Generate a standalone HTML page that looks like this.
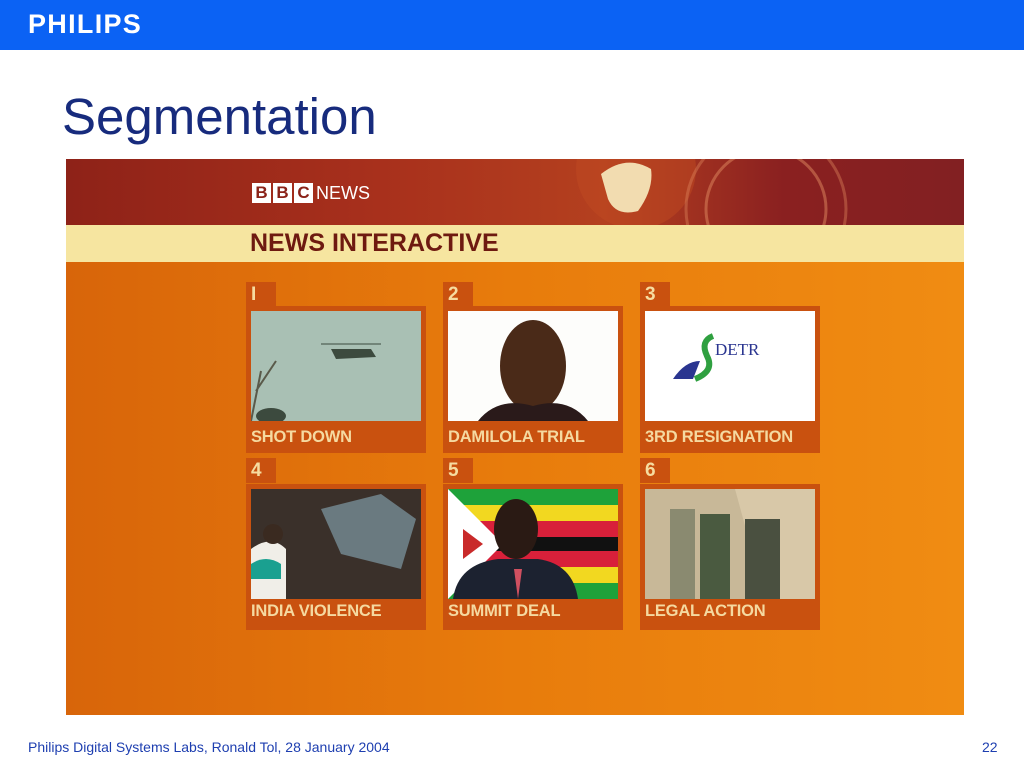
<!DOCTYPE html>
<html><head><meta charset="utf-8"><style>
*{margin:0;padding:0;box-sizing:border-box}
body{width:1024px;height:768px;position:relative;background:#fff;overflow:hidden;font-family:"Liberation Sans",sans-serif}
.a{position:absolute}
.top{left:0;top:0;width:1024px;height:50px;background:#0b62f4}
.logo{left:28px;top:9px;color:#fff;font-weight:bold;font-size:27px;letter-spacing:1.3px}
.title{left:62px;top:87px;color:#172b7d;font-size:51px}
.scr{left:66px;top:159px;width:898px;height:556px;background:linear-gradient(90deg,#d8650a 0%,#e87c0c 50%,#f08c12 100%);overflow:hidden}
.red{left:0;top:0;width:898px;height:66px;background:linear-gradient(90deg,#8e2218 0%,#a8301c 35%,#b4401f 60%,#8a2020 80%,#822022 100%)}
.yel{left:0;top:66px;width:898px;height:37px;background:#f6e5a0}
.tab{width:30px;height:25px;background:#c9510f;color:#f6dca0;font-weight:bold;font-size:19px;padding-left:5px;line-height:25px}
.box{width:180px;background:#c9510f}
.img{position:absolute;left:5px;top:5px;width:170px;overflow:hidden}
.lab{position:absolute;left:5px;color:#f5d9a0;font-weight:bold;font-size:16.5px;letter-spacing:-0.2px}
.ft{top:739px;font-size:14px;color:#1e3fb0}
</style></head><body>
<div class="a top"></div>
<div class="a logo">PHILIPS</div>
<div class="a title">Segmentation</div>
<div class="a scr">
 <div class="a red"></div>
 <svg class="a" style="left:500px;top:0" width="300" height="66"><circle cx="70" cy="10" r="60" fill="#c04a22" opacity=".5"/><path d="M35 15 Q60 -5 85 10 Q88 30 72 52 Q50 58 42 40 Z" fill="#f2dcb0"/><circle cx="200" cy="50" r="60" fill="none" stroke="#e08a60" stroke-width="3" opacity=".5"/><circle cx="200" cy="50" r="80" fill="none" stroke="#e08a60" stroke-width="3" opacity=".4"/></svg>
 <div class="a" style="left:186px;top:24px;display:flex;gap:2px">
  <span style="background:#fff;color:#8a2218;font-weight:bold;font-size:17px;width:19px;height:20px;text-align:center;line-height:20px">B</span>
  <span style="background:#fff;color:#8a2218;font-weight:bold;font-size:17px;width:19px;height:20px;text-align:center;line-height:20px">B</span>
  <span style="background:#fff;color:#8a2218;font-weight:bold;font-size:17px;width:19px;height:20px;text-align:center;line-height:20px">C</span>
  <span style="color:#fff;font-size:18px;line-height:20px;margin-left:1px">NEWS</span>
 </div>
 <div class="a yel"></div>
 <div class="a" style="left:184px;top:70px;color:#6e1a10;font-weight:bold;font-size:25px">NEWS INTERACTIVE</div>
</div>

<div class="a tab" style="left:246px;top:282px">I</div>
<div class="a box" style="left:246px;top:306px;height:147px">
 <div class="img" style="height:110px;background:#a9c0b4"><svg width="170" height="110"><path d="M80 38h40l5 8-40 2z" fill="#3c4a3e"/><path d="M70 33h60" stroke="#3c4a3e"/><path d="M0 110 L10 60 M5 80 L25 50" stroke="#5a5a4a" stroke-width="2"/><ellipse cx="20" cy="105" rx="15" ry="8" fill="#3c4a3e"/></svg></div>
 <div class="lab" style="top:122px">SHOT DOWN</div>
</div>
<div class="a tab" style="left:443px;top:282px">2</div>
<div class="a box" style="left:443px;top:306px;height:147px">
 <div class="img" style="height:110px;background:#fdfdfb"><svg width="170" height="110"><ellipse cx="85" cy="55" rx="33" ry="46" fill="#4a2a18"/><path d="M30 110 Q50 85 85 95 Q120 85 140 110Z" fill="#2a1a1a"/></svg></div>
 <div class="lab" style="top:122px">DAMILOLA TRIAL</div>
</div>
<div class="a tab" style="left:640px;top:282px">3</div>
<div class="a box" style="left:640px;top:306px;height:147px">
 <div class="img" style="height:110px;background:#fff"><svg width="170" height="110"><path d="M28 68 Q40 50 55 50 L48 68Z" fill="#2a3590"/><path d="M50 68 Q70 60 62 45 Q55 30 68 25" stroke="#2fa040" stroke-width="6" fill="none"/><text x="70" y="44" font-family="Liberation Serif" font-size="17" fill="#2a3590">DETR</text></svg></div>
 <div class="lab" style="top:122px">3RD RESIGNATION</div>
</div>

<div class="a tab" style="left:246px;top:458px">4</div>
<div class="a box" style="left:246px;top:484px;height:146px">
 <div class="img" style="height:110px;background:#3a302a"><svg width="170" height="110"><path d="M70 20 L130 5 L165 30 L150 80 L90 65Z" fill="#6a7a80"/><path d="M0 110 V60 Q20 45 35 60 V110Z" fill="#f0eee8"/><path d="M0 75 Q15 65 30 75 V90 H0Z" fill="#1aa090"/><circle cx="22" cy="45" r="10" fill="#3a2a20"/></svg></div>
 <div class="lab" style="top:118px">INDIA VIOLENCE</div>
</div>
<div class="a tab" style="left:443px;top:458px">5</div>
<div class="a box" style="left:443px;top:484px;height:146px">
 <div class="img" style="height:110px;background:#fff"><svg width="170" height="110">
  <rect width="170" height="16" fill="#1ea23a"/><rect y="16" width="170" height="16" fill="#f2d820"/><rect y="32" width="170" height="16" fill="#d8203a"/><rect y="48" width="170" height="14" fill="#111"/><rect y="62" width="170" height="16" fill="#d8203a"/><rect y="78" width="170" height="16" fill="#f2d820"/><rect y="94" width="170" height="16" fill="#1ea23a"/>
  <path d="M0 0 L55 55 L0 110Z" fill="#fff"/><path d="M15 40 l20 15 -20 15z" fill="#c92a2a"/>
  <path d="M5 110 Q10 75 50 70 L90 70 Q125 75 130 110Z" fill="#1c2230"/><ellipse cx="68" cy="40" rx="22" ry="30" fill="#2a1a14"/><path d="M66 80 l4 30 4-30z" fill="#d05060"/></svg></div>
 <div class="lab" style="top:118px">SUMMIT DEAL</div>
</div>
<div class="a tab" style="left:640px;top:458px">6</div>
<div class="a box" style="left:640px;top:484px;height:146px">
 <div class="img" style="height:110px;background:#c8b898"><svg width="170" height="110"><path d="M90 0 L170 0 V110 H120Z" fill="#d8c8a8"/><rect x="25" y="20" width="25" height="90" fill="#8a8a70"/><rect x="55" y="25" width="30" height="85" fill="#4a5a40"/><rect x="100" y="30" width="35" height="80" fill="#4a5040"/></svg></div>
 <div class="lab" style="top:118px">LEGAL ACTION</div>
</div>

<div class="a ft" style="left:28px">Philips Digital Systems Labs, Ronald Tol, 28 January 2004</div>
<div class="a ft" style="left:982px">22</div>
</body></html>
